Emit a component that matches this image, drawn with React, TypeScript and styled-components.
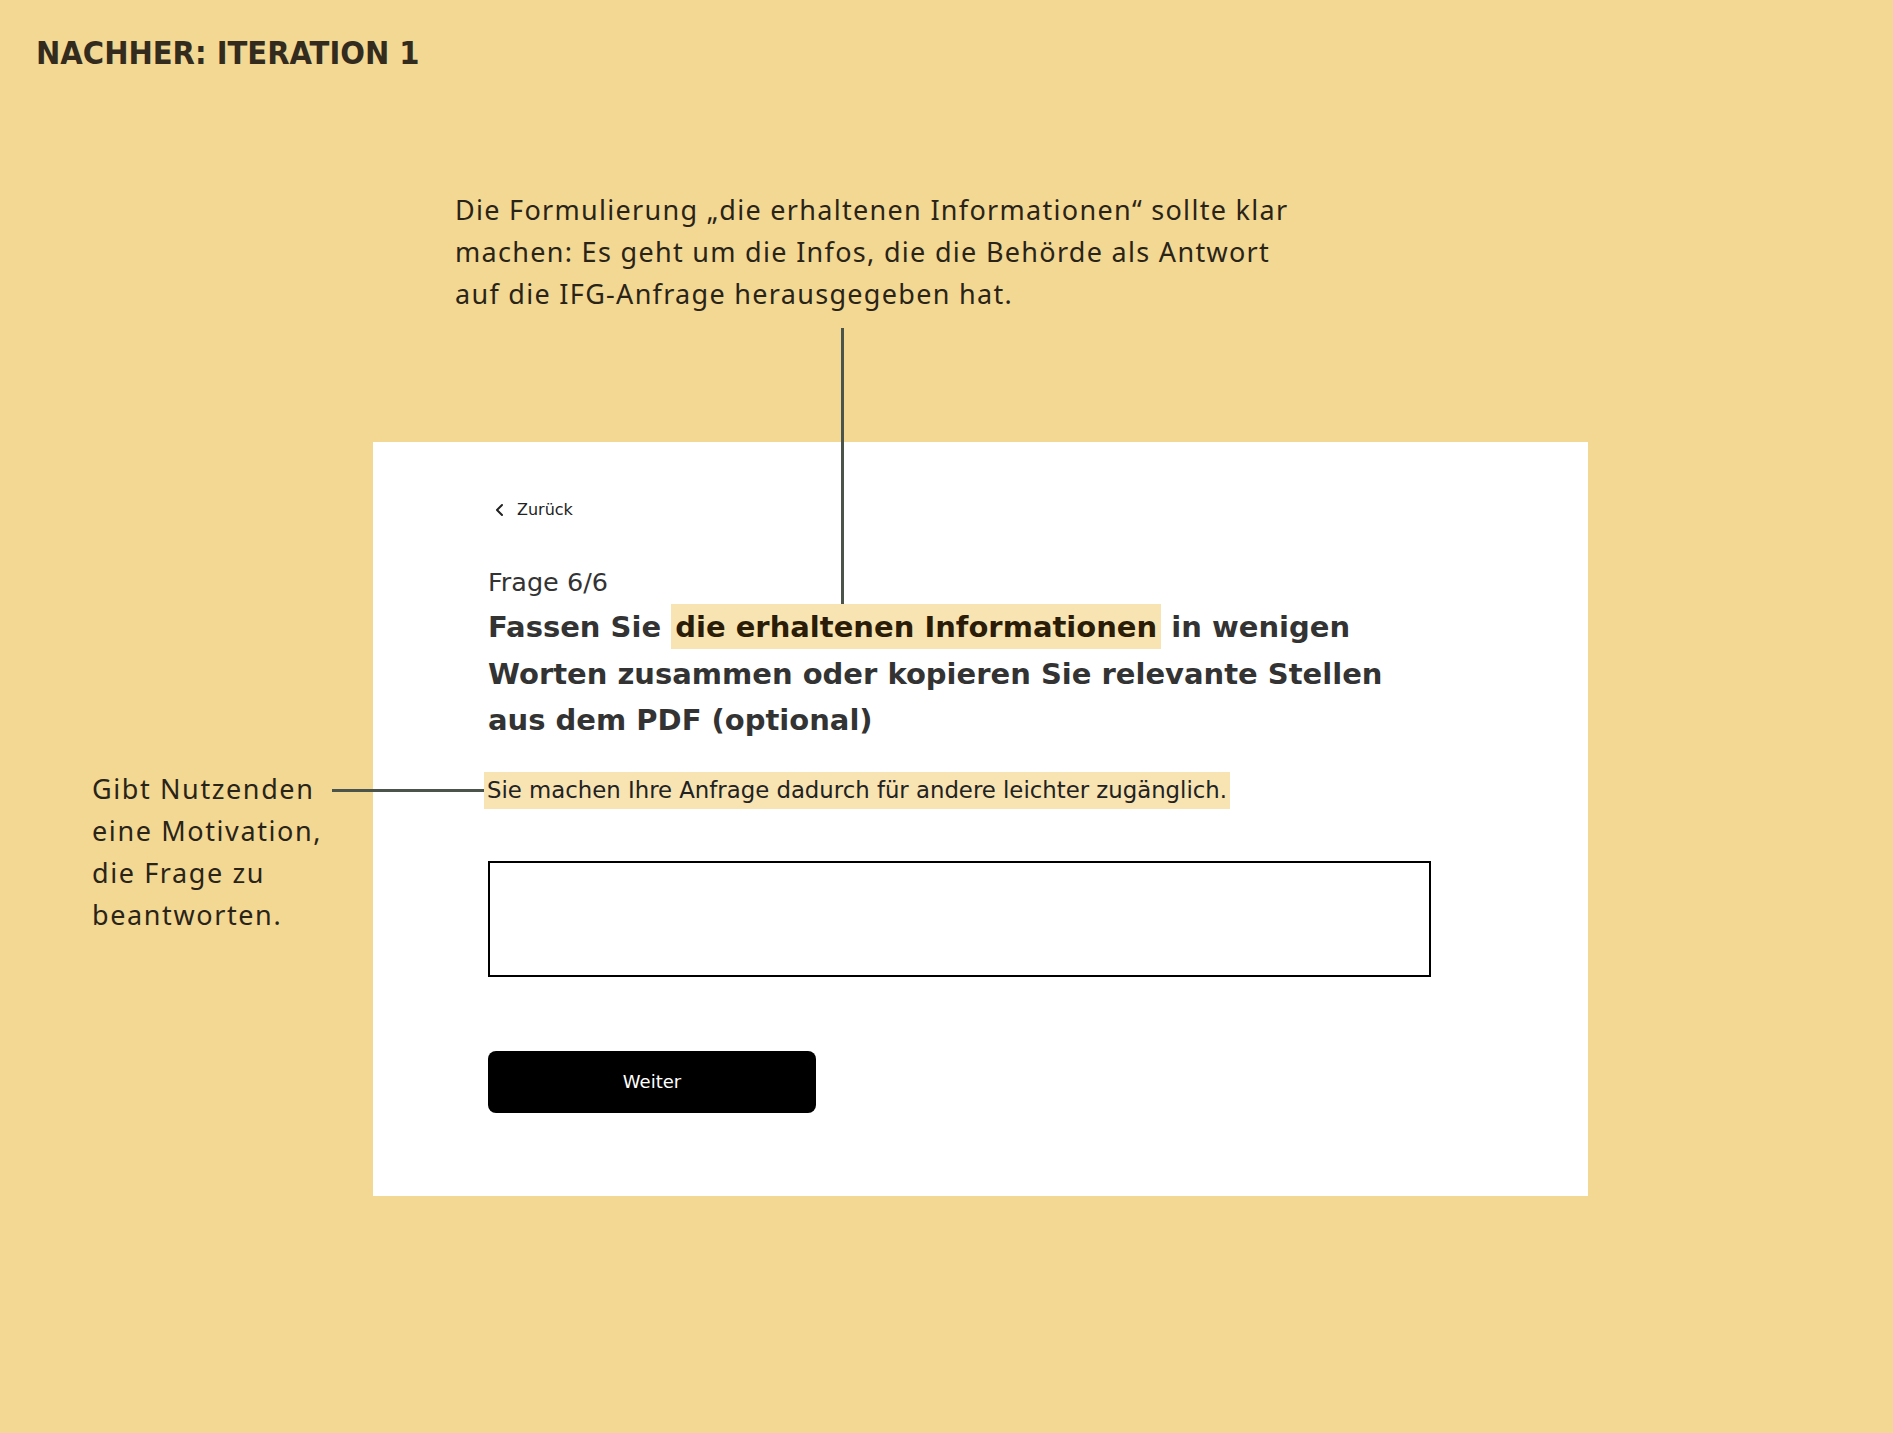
import styled, { createGlobalStyle } from 'styled-components';

const GlobalStyle = createGlobalStyle`
  html, body {
    margin: 0;
    padding: 0;
    background: #f2d893;
  }
  * {
    box-sizing: border-box;
  }
`;

const Board = styled.main`
  min-height: 1433px;
  background: #f2d893;
  padding: 31px 0 0 36px;
  display: flex;
  flex-direction: column;
  align-items: flex-start;
`;

const BoardTitle = styled.h1`
  margin: 0;
  font-family: 'DejaVu Sans Condensed', 'DejaVu Sans', sans-serif;
  font-stretch: condensed;
  font-weight: 700;
  font-size: 32.3px;
  line-height: 44px;
  color: #332c1e;
`;

const Note = styled.p`
  margin: 0;
  font-family: 'Noto Sans', 'Open Sans', sans-serif;
  font-size: 27px;
  line-height: 42px;
  letter-spacing: 1.3px;
  color: #2a2418;
`;

const TopNote = styled(Note)`
  margin: 114px 0 0 419px;
  width: 900px;
`;

const SideNote = styled(Note)`
  position: absolute;
  left: -392px;
  top: -4px;
  white-space: nowrap;
  letter-spacing: 1.6px;
`;

const Card = styled.section`
  margin: 127px 0 0 337px;
  width: 1215px;
  min-height: 753px;
  background: #fff;
  padding: 56px 115px 83px;
  font-family: 'DejaVu Sans', 'Comic Sans MS', sans-serif;
  color: #333;
  display: flex;
  flex-direction: column;
  align-items: flex-start;
`;

const BackLink = styled.a`
  display: inline-flex;
  align-items: center;
  gap: 13px;
  padding-left: 7px;
  font-size: 16px;
  line-height: 24px;
  color: #222;
  text-decoration: none;
  cursor: pointer;
`;

const Step = styled.div`
  margin-top: 44px;
  font-size: 25.5px;
  line-height: 32px;
  color: #333;
`;

const Question = styled.h2`
  margin: 6px 0 0;
  width: 950px;
  font-size: 29px;
  line-height: 46.5px;
  font-weight: 700;
  color: #333;
`;

const Marked = styled.span`
  position: relative;
  background: #f7e4b2;
  color: #2a1c06;
  padding: 6px 4px 5px;
`;

const VerticalLink = styled.span`
  position: absolute;
  left: 170px;
  bottom: 100%;
  width: 3px;
  height: 276px;
  background: #4b544a;
`;

const Hint = styled.p`
  position: relative;
  margin: 28px 0 0 -4px;
  padding: 4px 3px;
  font-size: 22.8px;
  line-height: 29px;
  background: #f7e4b2;
  color: #222;
`;

const HorizontalLink = styled.span`
  position: absolute;
  right: 100%;
  top: 50%;
  width: 152px;
  height: 3px;
  margin-top: -1px;
  background: #4b544a;
`;

const AnswerBox = styled.textarea`
  margin-top: 52px;
  width: 943px;
  height: 116px;
  border: 2px solid #000;
  border-radius: 0;
  resize: none;
  font: inherit;
  outline: none;
`;

const NextButton = styled.button`
  margin-top: 74px;
  width: 328px;
  height: 62px;
  border: none;
  border-radius: 8px;
  background: #000;
  color: #fff;
  font-family: inherit;
  font-size: 18px;
  cursor: pointer;
`;

const Chevron = () => (
  <svg width="9" height="14" viewBox="0 0 9 14" fill="none">
    <path d="M7 2L2 7L7 12" stroke="#222" strokeWidth="2" strokeLinecap="round" strokeLinejoin="round" />
  </svg>
);

export default function App() {
  return (
    <>
      <GlobalStyle />
      <Board>
        <BoardTitle>NACHHER: ITERATION 1</BoardTitle>
        <TopNote>
          Die Formulierung „die erhaltenen Informationen“ sollte klar
          <br />
          machen: Es geht um die Infos, die die Behörde als Antwort
          <br />
          auf die IFG-Anfrage herausgegeben hat.
        </TopNote>
        <Card>
          <BackLink>
            <Chevron />
            Zurück
          </BackLink>
          <Step>Frage 6/6</Step>
          <Question>
            Fassen Sie{' '}
            <Marked>
              <VerticalLink />
              die erhaltenen Informationen
            </Marked>{' '}
            in wenigen Worten zusammen oder kopieren Sie relevante Stellen aus dem PDF (optional)
          </Question>
          <Hint>
            <HorizontalLink />
            <SideNote>
              Gibt Nutzenden
              <br />
              eine Motivation,
              <br />
              die Frage zu
              <br />
              beantworten.
            </SideNote>
            Sie machen Ihre Anfrage dadurch für andere leichter zugänglich.
          </Hint>
          <AnswerBox aria-label="Antwort" />
          <NextButton>Weiter</NextButton>
        </Card>
      </Board>
    </>
  );
}
